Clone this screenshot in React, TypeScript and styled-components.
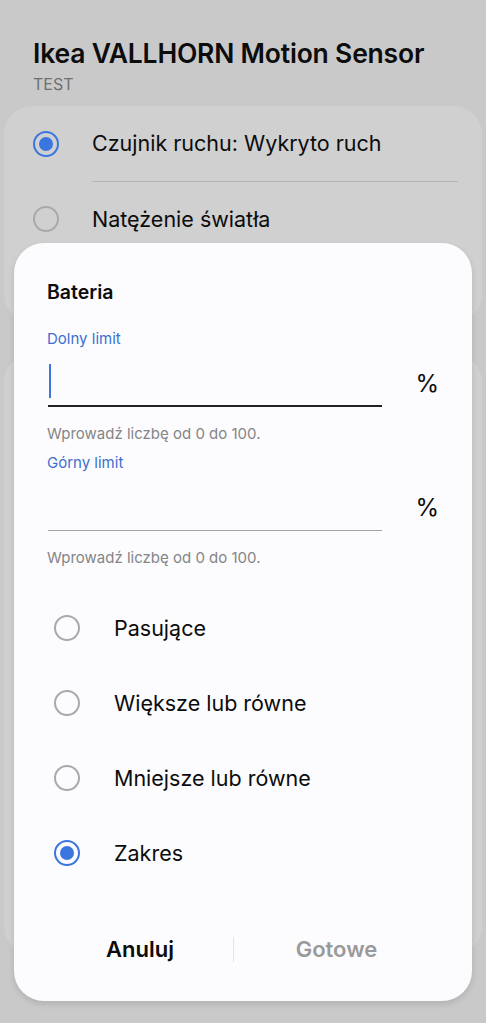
import React from 'react'
import styled, { createGlobalStyle } from 'styled-components'

const Global = createGlobalStyle`
  html, body {
    margin: 0;
    padding: 0;
    background: #c9c9ca;
    font-family: Inter, Roboto, "Noto Sans", sans-serif;
    color: #0c0c0c;
  }
`

const Page = styled.div`
  min-height: 1023px;
  padding: 37px 0 0;
  box-sizing: border-box;
`

const Header = styled.div`
  padding: 0 33px;
`

const Title = styled.div`
  font-size: 26.5px;
  line-height: 32px;
  font-weight: 600;
  letter-spacing: -0.2px;
`

const Sub = styled.div`
  font-size: 16px;
  line-height: 22px;
  color: #6f6f70;
  margin-top: 4px;
`

const Card = styled.div<{ $height: number; $gap: number }>`
  margin: ${(p) => p.$gap}px 4px 0;
  height: ${(p) => p.$height}px;
  background: #d0d0d1;
  border-radius: 28px;
  overflow: hidden;
`

const BgRow = styled.div<{ $line?: boolean }>`
  display: flex;
  align-items: center;
  height: 75px;
  padding-left: 29px;
  gap: 33px;
  font-size: 21.5px;
  span {
    flex: 1;
    height: 100%;
    display: flex;
    align-items: center;
    margin-right: 24px;
    border-bottom: ${(p) => (p.$line ? '1px solid #b5b5b6' : 'none')};
  }
`

const Radio = styled.div<{ $on?: boolean }>`
  width: 26px;
  height: 26px;
  flex: none;
  box-sizing: border-box;
  border-radius: 50%;
  border: ${(p) => (p.$on ? '2.5px solid #3b76e0' : '2px solid #a9a9aa')};
  display: flex;
  align-items: center;
  justify-content: center;
  &::after {
    content: '';
    display: ${(p) => (p.$on ? 'block' : 'none')};
    width: 14px;
    height: 14px;
    border-radius: 50%;
    background: #3b76e0;
  }
`

const Overlay = styled.div`
  position: absolute;
  left: 0;
  top: 0;
  width: 486px;
  height: 1023px;
  display: flex;
  align-items: flex-end;
  justify-content: center;
  padding: 0 14px 22px;
  box-sizing: border-box;
`

const Dialog = styled.div`
  width: 100%;
  background: #fcfcfe;
  border-radius: 30px;
  padding: 37px 33px 27px;
  box-sizing: border-box;
  box-shadow: 0 3px 6px rgba(0, 0, 0, 0.12);
`

const DialogTitle = styled.div`
  font-size: 19.5px;
  line-height: 24px;
  font-weight: 600;
`

const Label = styled.div<{ $top: number }>`
  margin-top: ${(p) => p.$top}px;
  font-size: 15px;
  line-height: 20px;
  color: #3d6fd0;
`

const FieldRow = styled.div`
  display: flex;
  gap: 33px;
`

const Field = styled.div<{ $active?: boolean; $height: number }>`
  flex: 1;
  height: ${(p) => p.$height}px;
  margin-left: 1px;
  padding-top: 8px;
  border-bottom: ${(p) => (p.$active ? '2px solid #222' : '1px solid #a3a3a4')};
  display: flex;
  align-items: center;
`

const Caret = styled.div`
  width: 2px;
  height: 34px;
  background: #3d76e0;
  margin-left: 1px;
`

const Unit = styled.div`
  font-size: 24px;
  line-height: 30px;
  align-self: center;
  margin-top: 12px;
`

const Helper = styled.div`
  margin-top: 17px;
  font-size: 15px;
  line-height: 20px;
  color: #858586;
`

const Options = styled.div`
  margin-top: 22px;
`

const Option = styled.div`
  display: flex;
  align-items: center;
  height: 75px;
  padding-left: 7px;
  gap: 34px;
  font-size: 21.5px;
`

const Actions = styled.div`
  margin-top: 34px;
  height: 50px;
  display: grid;
  grid-template-columns: 186px 1px 1fr;
  align-items: center;
`

const Action = styled.div<{ $muted?: boolean }>`
  text-align: center;
  font-size: 22px;
  font-weight: 600;
  color: ${(p) => (p.$muted ? '#9a9a9b' : '#0c0c0c')};
`

const Sep = styled.div`
  height: 25px;
  background: #e4e4e6;
`

const options = [
  { label: 'Pasujące', on: false },
  { label: 'Większe lub równe', on: false },
  { label: 'Mniejsze lub równe', on: false },
  { label: 'Zakres', on: true },
]

const App = () => {
  return (
    <>
      <Global />
      <Page>
        <Header>
          <Title>Ikea VALLHORN Motion Sensor</Title>
          <Sub>TEST</Sub>
        </Header>
        <Card $height={216} $gap={11}>
          <BgRow $line>
            <Radio $on />
            <span>Czujnik ruchu: Wykryto ruch</span>
          </BgRow>
          <BgRow>
            <Radio />
            <span>Natężenie światła</span>
          </BgRow>
        </Card>
        <Card $height={600} $gap={32} />
      </Page>
      <Overlay>
        <Dialog>
          <DialogTitle>Bateria</DialogTitle>
          <Label $top={25}>Dolny limit</Label>
          <FieldRow>
            <Field $active $height={48}>
              <Caret />
            </Field>
            <Unit>%</Unit>
          </FieldRow>
          <Helper>Wprowadź liczbę od 0 do 100.</Helper>
          <Label $top={9}>Górny limit</Label>
          <FieldRow>
            <Field $height={49} />
            <Unit>%</Unit>
          </FieldRow>
          <Helper>Wprowadź liczbę od 0 do 100.</Helper>
          <Options>
            {options.map((o) => (
              <Option key={o.label}>
                <Radio $on={o.on} />
                {o.label}
              </Option>
            ))}
          </Options>
          <Actions>
            <Action>Anuluj</Action>
            <Sep />
            <Action $muted>Gotowe</Action>
          </Actions>
        </Dialog>
      </Overlay>
    </>
  )
}

export default App
